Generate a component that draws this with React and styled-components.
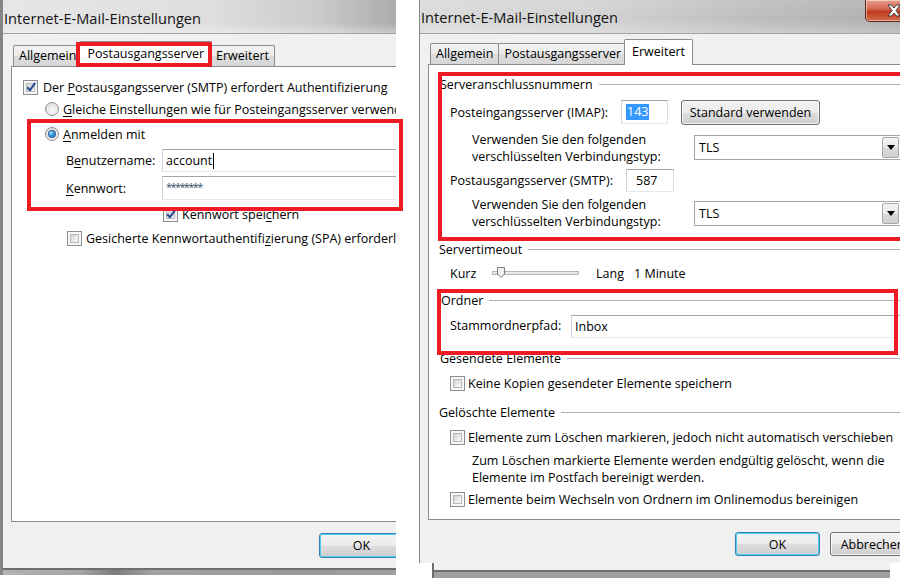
import React from "react";
import styled, { createGlobalStyle } from "styled-components";

const FONT = `"Open Sans", "Noto Sans", "DejaVu Sans", sans-serif`;

const GlobalStyle = createGlobalStyle`
  html, body {
    margin: 0;
    padding: 0;
    background: #ffffff;
  }
  body {
    font-family: ${FONT};
    font-size: 12.5px;
    color: #000;
  }
  * {
    box-sizing: border-box;
  }
`;

const Page = styled.div`
  position: relative;
  width: 900px;
  height: 578px;
  overflow: hidden;
  display: flex;
  align-items: flex-start;
  background: #fff;
`;

const Clip = styled.div`
  flex-shrink: 0;
  width: ${(p) => p.$w}px;
  margin-left: ${(p) => p.$ml || 0}px;
  overflow: hidden;
`;

const Window = styled.div`
  width: ${(p) => p.$w}px;
  border-left: ${(p) => p.$frame}px solid #858585;
`;

const TitleBar = styled.div`
  height: 33px;
  display: flex;
  align-items: center;
  padding-left: ${(p) => p.$pl}px;
  background: ${(p) => p.$bg};
`;

const Title = styled.span`
  font-size: 14.6px;
  color: #141414;
  margin-top: ${(p) => p.$mt || 0}px;
`;

const CloseButton = styled.div`
  align-self: flex-start;
  margin-left: auto;
  margin-right: 1px;
  width: 58px;
  height: 22px;
  border: 1px solid #5b2a22;
  border-top: none;
  border-radius: 0 0 5px 5px;
  background: linear-gradient(#e8a08d 0%, #d2644a 45%, #c2391e 55%, #d46a4a 100%);
  box-shadow: inset 0 0 0 1px rgba(255, 255, 255, 0.45);
  display: flex;
  align-items: center;
  justify-content: center;
`;

const Body = styled.div`
  height: ${(p) => p.$h}px;
  background: #f0f0f0;
  border-top: 1px solid #a3a3a3;
  padding: ${(p) => p.$pt}px 8px 0 8px;
`;

const TabStrip = styled.div`
  display: flex;
  align-items: flex-end;
  height: 25px;
  padding-left: 2px;
  margin-bottom: -1px;
  position: relative;
  z-index: 1;
`;

const Tab = styled.div`
  height: ${(p) => (p.$active ? 26 : 21)}px;
  padding: ${(p) => (p.$active ? "3px 7px 0" : "1px 5px 0")};
  margin: ${(p) => (p.$active ? "0 -2px" : "0 -1px 1px 0")};
  border: 1px solid #898c95;
  border-bottom: none;
  border-radius: 2px 2px 0 0;
  background: ${(p) =>
    p.$active
      ? "#ffffff"
      : "linear-gradient(#f3f3f3 0%, #ebebeb 50%, #dddddd 51%, #d6d6d6 100%)"};
  position: relative;
  z-index: ${(p) => (p.$active ? 2 : 1)};
  white-space: nowrap;
  color: #000;
`;

const Panel = styled.div`
  height: 456px;
  background: #fff;
  border: 1px solid #898c95;
  display: flex;
  flex-direction: column;
`;

const Footer = styled.div`
  display: flex;
  justify-content: flex-end;
  gap: 10px;
  padding-top: ${(p) => p.$pt}px;
  padding-right: 1px;
`;

const Button = styled.div`
  width: ${(p) => p.$w || 85}px;
  height: ${(p) => p.$h || 25}px;
  margin-left: ${(p) => p.$ml || 0}px;
  display: flex;
  align-items: center;
  justify-content: center;
  flex-shrink: 0;
  border: 1px solid ${(p) => (p.$default ? "#3c7fb1" : "#707070")};
  border-radius: 3px;
  background: linear-gradient(#f2f2f2 0%, #ebebeb 50%, #dddddd 51%, #cfcfcf 100%);
  box-shadow: ${(p) =>
    p.$default
      ? "inset 0 0 0 1px #48d0f5"
      : "inset 0 0 0 1px rgba(255, 255, 255, 0.7)"};
  white-space: nowrap;
  color: #000;
`;

const Row = styled.div`
  display: flex;
  align-items: center;
  flex-shrink: 0;
  height: ${(p) => p.$h}px;
  margin-top: ${(p) => p.$mt || 0}px;
  padding-left: ${(p) => p.$pl || 0}px;
  white-space: nowrap;
`;

const Label = styled.span`
  flex-shrink: 0;
  width: ${(p) => (p.$w ? `${p.$w}px` : "auto")};
  margin-left: ${(p) => p.$ml || 0}px;
  margin-top: ${(p) => p.$mt || 0}px;
  line-height: 17px;
`;

const U = styled.span`
  text-decoration: underline;
  text-underline-offset: 2px;
`;

const GroupHeader = styled.div`
  display: flex;
  align-items: center;
  flex-shrink: 0;
  height: 20px;
  margin-top: ${(p) => p.$mt || 0}px;
  padding-left: ${(p) => p.$pl || 11}px;
  padding-right: 6px;
  white-space: nowrap;

  &::after {
    content: "";
    flex: 1;
    height: 1px;
    margin-left: 6px;
    background: #b1b1b1;
  }
`;

const TextBox = styled.div`
  flex-shrink: 0;
  width: ${(p) => p.$w}px;
  height: ${(p) => p.$h || 23}px;
  display: flex;
  align-items: center;
  padding-left: ${(p) => p.$pad || 3}px;
  background: #fff;
  border: 1px solid;
  border-color: #a6a6a6 #d8dce3 #e3e9ef #d0d3da;
  white-space: nowrap;
`;

const Caret = styled.span`
  display: inline-block;
  width: 1px;
  height: 16px;
  margin-left: 1px;
  background: #000;
`;

const Masked = styled.span`
  font-size: 11px;
  letter-spacing: -1.6px;
  color: #3b4a66;
  margin-top: -4px;
`;

const Selected = styled.span`
  background: #3399ff;
  color: #fff;
  padding: 0 1px;
  line-height: 16px;
`;

const Combo = styled.div`
  flex-shrink: 0;
  width: ${(p) => p.$w}px;
  height: 25px;
  display: flex;
  align-items: center;
  padding-left: 4px;
  background: #fff;
  border: 1px solid #a5a5a5;
`;

const ComboArrow = styled.div`
  margin-left: auto;
  margin-right: 1px;
  width: 17px;
  height: 21px;
  display: flex;
  align-items: center;
  justify-content: center;
  border: 1px solid #a8a8a8;
  border-radius: 2px;
  background: linear-gradient(#f4f4f4 0%, #e9e9e9 50%, #dadada 51%, #d0d0d0 100%);
`;

const Box = styled.span`
  position: relative;
  flex-shrink: 0;
  width: 15px;
  height: 15px;
  border: 1px solid #8e8f8f;
  background: #f7f7f7;
  padding: 2px;
  display: inline-flex;
`;

const BoxInner = styled.span`
  flex: 1;
  border: 1px solid #b5b8bd;
  background: linear-gradient(135deg, #d0d2d6 0%, #e8e9ea 55%, #fbfbfb 100%);
`;

const Tick = styled.svg`
  position: absolute;
  left: 0;
  top: -1px;
`;

const RadioOuter = styled.span`
  flex-shrink: 0;
  width: 14px;
  height: 14px;
  border-radius: 50%;
  border: 1px solid #8e8f8f;
  background: radial-gradient(circle at 60% 65%, #fbfbfb 0%, #e6e6e6 55%, #cfcfcf 100%);
  display: inline-flex;
  align-items: center;
  justify-content: center;
`;

const RadioDot = styled.span`
  width: 6px;
  height: 6px;
  border-radius: 50%;
  background: radial-gradient(circle at 35% 35%, #b9ecff 0%, #2d8ee0 45%, #0c4e92 100%);
  box-shadow: 0 0 0 1px #2a5d9a;
`;

const SliderTrack = styled.svg`
  flex-shrink: 0;
  margin-right: ${(p) => p.$mr}px;
`;

const Highlight = styled.div`
  position: absolute;
  left: ${(p) => p.$l}px;
  top: ${(p) => p.$t}px;
  width: ${(p) => p.$w}px;
  height: ${(p) => p.$h}px;
  border: 4px solid #ed1c24;
  pointer-events: none;
  z-index: 5;
`;

const FrameBottom = styled.div`
  height: 7px;
  border-top: 2px solid #6e6e6e;
  background: linear-gradient(
    90deg,
    #b2b2b2 0%,
    #a6a6a6 15%,
    #7d7d7d 22%,
    #a2a2a2 30%,
    #9a9a9a 60%,
    #a8a8a8 100%
  );
`;

const BackFrame = styled.div`
  margin-left: 13px;
  width: 458px;
  height: 15px;
  border-left: 2px solid #6e6e6e;
  background: linear-gradient(#f0f0f0 0 7px, #6e6e6e 7px 9px, #a0a0a0 9px);
`;

const CheckBox = ({ checked }) => (
  <Box>
    <BoxInner />
    {checked && (
      <Tick width="15" height="15" viewBox="0 0 15 15">
        <path
          d="M3.2 7.2 L6 10.2 L11.2 2.8"
          fill="none"
          stroke="#2f4f93"
          strokeWidth="2.2"
          strokeLinejoin="round"
        />
      </Tick>
    )}
  </Box>
);

const Radio = ({ checked }) => (
  <RadioOuter>{checked && <RadioDot />}</RadioOuter>
);

const DownArrow = () => (
  <svg width="8" height="5" viewBox="0 0 8 5">
    <path d="M0 0 H8 L4 5 Z" fill="#000" />
  </svg>
);

const CloseGlyph = () => (
  <svg width="14" height="13" viewBox="0 0 14 13">
    <path
      d="M1 1 H4.5 L7 4 L9.5 1 H13 L9 6.5 L13 12 H9.5 L7 9 L4.5 12 H1 L5 6.5 Z"
      fill="#fff"
      stroke="#3b3b3b"
      strokeWidth="1"
    />
  </svg>
);

const Slider = () => (
  <SliderTrack width="88" height="14" viewBox="0 0 88 14" $mr={16}>
    <rect x="0.5" y="5.5" width="86" height="3" fill="#e7eaea" stroke="#b4b4b4" />
    <path d="M5.5 1.5 H12.5 V8 L9 11.5 L5.5 8 Z" fill="#f2f2f2" stroke="#7a7a7a" />
  </SliderTrack>
);

const leftTitleBg =
  "linear-gradient(180deg, rgba(255,255,255,0) 70%, rgba(255,255,255,0.35) 100%), linear-gradient(90deg, #e6e6e6 0%, #dfdfdf 40%, #cbcbcb 62%, #a4a4a4 82%, #b6b6b6 100%)";
const rightTitleBg =
  "linear-gradient(180deg, rgba(255,255,255,0.1) 0%, rgba(255,255,255,0) 60%, rgba(255,255,255,0.25) 100%), linear-gradient(90deg, #dadada 0%, #d2d2d2 35%, #bebebe 65%, #acacac 100%)";

const OutgoingTab = () => (
  <Panel>
    <Row $h={24} $mt={8} $pl={11}>
      <CheckBox checked />
      <Label $ml={5}>
        Der <U>P</U>ostausgangsserver (SMTP) erfordert Authentifizierung
      </Label>
    </Row>
    <Row $h={20} $pl={33}>
      <Radio />
      <Label $ml={4}>
        <U>G</U>leiche Einstellungen wie für Posteingangsserver verwenden
      </Label>
    </Row>
    <Row $h={30} $pl={33}>
      <Radio checked />
      <Label $ml={4}>
        <U>A</U>nmelden mit
      </Label>
    </Row>
    <Row $h={23} $pl={54}>
      <Label $w={96}>
        B<U>e</U>nutzername:
      </Label>
      <TextBox $w={300}>
        account
        <Caret />
      </TextBox>
    </Row>
    <Row $h={24} $mt={4} $pl={54}>
      <Label $w={96}>
        <U>K</U>ennwort:
      </Label>
      <TextBox $w={300} $h={24}>
        <Masked>********</Masked>
      </TextBox>
    </Row>
    <Row $h={28} $pl={151}>
      <CheckBox checked />
      <Label $ml={4}>
        Kennwort spei<U>c</U>hern
      </Label>
    </Row>
    <Row $h={20} $pl={55}>
      <CheckBox />
      <Label $ml={4}>
        Gesicherte Kennwortauthentifi<U>z</U>ierung (SPA) erforderlich
      </Label>
    </Row>
  </Panel>
);

const EncryptionRow = ({ mt, h }) => (
  <Row $h={h} $mt={mt} $pl={43}>
    <Label $w={222}>
      Verwenden Sie den folgenden
      <br />
      verschlüsselten Verbindungstyp:
    </Label>
    <Combo $w={207}>
      TLS
      <ComboArrow>
        <DownArrow />
      </ComboArrow>
    </Combo>
  </Row>
);

const CheckRow = ({ mt, children }) => (
  <Row $h={20} $mt={mt} $pl={21}>
    <CheckBox />
    <Label $ml={3}>{children}</Label>
  </Row>
);

const AdvancedTab = () => (
  <Panel>
    <GroupHeader $mt={9}>Serveranschlussnummern</GroupHeader>
    <Row $h={26} $mt={5} $pl={21}>
      <Label $w={171}>Posteingangsserver (IMAP):</Label>
      <TextBox $w={47} $h={24} $pad={4}>
        <Selected>143</Selected>
      </TextBox>
      <Button $w={139} $h={25} $ml={13}>
        Standard verwenden
      </Button>
    </Row>
    <EncryptionRow mt={5} h={35} />
    <Row $h={30} $pl={21}>
      <Label $w={176}>Postausgangsserver (SMTP):</Label>
      <TextBox $w={48} $pad={9}>
        587
      </TextBox>
    </Row>
    <EncryptionRow h={36} />
    <GroupHeader $mt={8} $pl={10}>
      Servertimeout
    </GroupHeader>
    <Row $h={20} $mt={4} $pl={21}>
      <Label $w={42}>Kurz</Label>
      <Slider />
      <Label $w={38}>Lang</Label>
      <Label>1 Minute</Label>
    </Row>
    <GroupHeader $mt={7} $pl={12}>
      Ordner
    </GroupHeader>
    <Row $h={25} $mt={4} $pl={21}>
      <Label $w={121} $mt={-3}>
        Stammordnerpfad:
      </Label>
      <TextBox $w={345}>Inbox</TextBox>
    </Row>
    <GroupHeader $mt={9}>Gesendete Elemente</GroupHeader>
    <CheckRow mt={5}>Keine Kopien gesendeter Elemente speichern</CheckRow>
    <GroupHeader $mt={9} $pl={10}>
      Gelöschte Elemente
    </GroupHeader>
    <CheckRow mt={5}>
      Elemente zum Löschen markieren, jedoch nicht automatisch verschieben
    </CheckRow>
    <Row $h={34} $mt={5} $pl={43}>
      <Label>
        Zum Löschen markierte Elemente werden endgültig gelöscht, wenn die
        <br />
        Elemente im Postfach bereinigt werden.
      </Label>
    </Row>
    <CheckRow mt={3}>
      Elemente beim Wechseln von Ordnern im Onlinemodus bereinigen
    </CheckRow>
  </Panel>
);

const tabs = ["Allgemein", "Postausgangsserver", "Erweitert"];

const Tabs = ({ active }) => (
  <TabStrip>
    {tabs.map((t) => (
      <Tab key={t} $active={t === active}>
        {t}
      </Tab>
    ))}
  </TabStrip>
);

export default function App() {
  return (
    <>
      <GlobalStyle />
      <Page>
        <Clip $w={396}>
          <Window $w={508} $frame={3}>
            <TitleBar $pl={1} $bg={leftTitleBg}>
              <Title $mt={2}>Internet-E-Mail-Einstellungen</Title>
            </TitleBar>
            <Body $h={535} $pt={8}>
              <Tabs active="Postausgangsserver" />
              <OutgoingTab />
              <Footer $pt={11}>
                <Button $default>OK</Button>
                <Button>Abbrechen</Button>
              </Footer>
            </Body>
            <FrameBottom />
          </Window>
        </Clip>

        <Clip $w={481} $ml={23}>
          <Window $w={505} $frame={1}>
            <TitleBar $pl={1} $bg={rightTitleBg}>
              <Title>Internet-E-Mail-Einstellungen</Title>
              <CloseButton>
                <CloseGlyph />
              </CloseButton>
            </TitleBar>
            <Body $h={530} $pt={6}>
              <Tabs active="Erweitert" />
              <AdvancedTab />
              <Footer $pt={12}>
                <Button $default $h={24}>
                  OK
                </Button>
                <Button $h={24}>Abbrechen</Button>
              </Footer>
            </Body>
          </Window>
          <BackFrame />
        </Clip>

        <Highlight $l={76} $t={42} $w={136} $h={25} />
        <Highlight $l={27} $t={119} $w={376} $h={92} />
        <Highlight $l={438} $t={72} $w={470} $h={169} />
        <Highlight $l={437} $t={289} $w={461} $h={66} />
      </Page>
    </>
  );
}
